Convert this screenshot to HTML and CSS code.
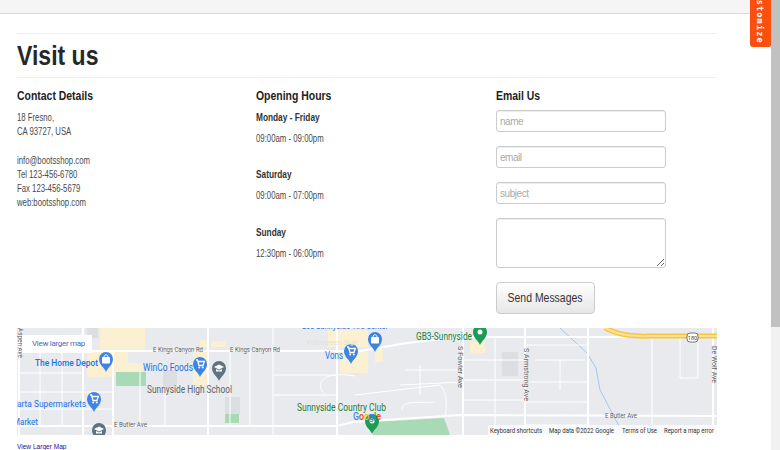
FILE: index.html
```html
<!DOCTYPE html>
<html lang="en">
<head>
<meta charset="utf-8">
<title>Visit us</title>
<link rel="stylesheet" href="styles.css">
</head>
<body>
<div class="topbar"></div>
<main class="container">
  <h1 class="title"><span class="title-text">Visit us</span></h1>
  <div class="columns">
    <section>
      <h2 class="col-head">Contact Details</h2>
      <p class="contact">18 Fresno,<br>CA 93727, USA</p>
      <p class="contact">info@bootsshop.com<br>Tel 123-456-6780<br>Fax 123-456-5679<br>web:bootsshop.com</p>
    </section>
    <section>
      <h2 class="col-head">Opening Hours</h2>
      <div class="hours"><h3 class="day">Monday - Friday</h3><p class="time">09:00am - 09:00pm</p></div>
      <div class="hours"><h3 class="day">Saturday</h3><p class="time">09:00am - 07:00pm</p></div>
      <div class="hours"><h3 class="day">Sunday</h3><p class="time">12:30pm - 06:00pm</p></div>
    </section>
    <section>
      <h2 class="col-head">Email Us</h2>
      <form class="form">
        <input class="field" type="text" placeholder="name">
        <input class="field" type="text" placeholder="email">
        <input class="field" type="text" placeholder="subject">
        <textarea class="field area"></textarea>
        <button class="send" type="button"><span class="send-text">Send Messages</span></button>
      </form>
    </section>
  </div>
  <div class="map">
    <svg class="map-svg" width="700" height="107" viewBox="17 328 700 107" xmlns="http://www.w3.org/2000/svg">
      <defs>
        <path id="pin" d="M0 0C-2-5-7-7-7-13A7 7 0 0 1 7-13C7-7 2-5 0 0Z"/>
        <g id="cart">
          <path d="M-4-17H-2.5L-1-11.5H3L4.3-15.5H-2" fill="none" stroke="#fff" stroke-width="1.3"/>
          <circle cx="-.8" cy="-9.6" r="1" fill="#fff"/><circle cx="2.8" cy="-9.6" r="1" fill="#fff"/>
        </g>
        <g id="bag">
          <rect x="-4" y="-15" width="8" height="6.5" rx="1" fill="#fff"/>
          <path d="M-2-15C-2-18 2-18 2-15" fill="none" stroke="#fff" stroke-width="1"/>
        </g>
        <g id="school">
          <path d="M-5-14 0-16.5 5-14 0-11.5Z" fill="#fff"/>
          <path d="M-3-12V-9.5H3V-12L0-10.5Z" fill="#fff"/>
        </g>
      </defs>
      <rect x="17" y="328" width="700" height="107" fill="#e8eaed"/>
      <g fill="#fbf0d2">
        <rect x="100" y="328" width="45" height="24"/>
        <rect x="87" y="352" width="28" height="25"/>
        <rect x="115" y="352" width="13" height="20"/>
        <rect x="128" y="363" width="15" height="9"/>
        <rect x="193" y="352" width="15" height="33"/>
        <rect x="200" y="340" width="8" height="7"/>
        <rect x="212" y="341" width="13" height="6"/>
        <rect x="328" y="330" width="40" height="17"/>
        <rect x="340" y="351" width="28" height="22"/>
        <rect x="375" y="349" width="8" height="13"/>
        <rect x="470" y="342" width="15" height="11"/>
      </g>
      <g fill="#dcdee1">
        <rect x="87" y="328" width="11" height="10"/>
        <rect x="163" y="370" width="14" height="17"/>
        <rect x="225" y="397" width="15" height="17"/>
        <rect x="502" y="352" width="16" height="24"/>
      </g>
      <g fill="#a8dab5">
        <rect x="116" y="372" width="30" height="14"/>
        <rect x="225" y="414" width="14" height="9"/>
        <path d="M373 435 373 422 444 418 450 435Z"/>
      </g>
      <path d="M560 328 587 353 596 368 600 390 620 428" fill="none" stroke="#a9c6ee" stroke-width="1"/>
      <g fill="none" stroke="#fff" stroke-width="2">
        <path d="M19 328V435M83 328V435M113 352V435M208 328V435M337 328V435M463 328V435M525 328V435M588 328V435M713 328V435"/>
        <path d="M17 351H360L407 343 460 337H717"/>
        <path d="M17 426H337L353 422 460 415 717 416"/>
      </g>
      <g fill="none" stroke="#fff" stroke-width="1">
        <path d="M273 328V435M495 337V435M652 337V435M19 373H83M19 392H113M19 409H113M40 351V426M62 351V426M140 372V426M165 387V426M230 351V426M250 351V426M273 375H337M273 395H337"/>
        <path d="M355 376C320 370 315 385 325 395M405 370H463M400 385 463 382M355 395 440 385C450 395 445 416 445 416M402 410C400 400 420 403 435 402M420 365V395"/>
        <path d="M463 360H525M463 380H525M463 400H525M525 345H588M535 360H585M525 382H588M525 402H588M525 425H588M560 360V390M680 337V378H698V337"/>
      </g>
      <path d="M605 328C625 338 640 336 655 336H717" fill="none" stroke="#f9c440" stroke-width="5"/>
      <path d="M605 328C625 338 640 336 655 336H717" fill="none" stroke="#fde293" stroke-width="2"/>
      <rect x="687" y="333" width="11" height="9" rx="3" fill="#fff" stroke="#555" stroke-width=".8"/>
      <text x="692.5" y="340" class="t shield">180</text>

      <g class="p-blue">
        <use href="#pin" x="106" y="372"/><use href="#pin" x="200" y="377"/>
        <use href="#pin" x="94" y="412"/><use href="#pin" x="351" y="364"/><use href="#pin" x="375" y="352"/>
      </g>
      <g class="p-grey"><use href="#pin" x="219" y="381"/><use href="#pin" x="99" y="443"/></g>
      <g class="p-green"><use href="#pin" x="480" y="345"/><use href="#pin" x="372" y="434"/></g>
      <use href="#bag" x="106" y="372"/><use href="#cart" x="200" y="377"/>
      <use href="#cart" x="94" y="412"/><use href="#cart" x="351" y="364"/><use href="#bag" x="375" y="352"/>
      <use href="#school" x="219" y="381"/><use href="#school" x="99" y="443"/>
      <circle cx="480" cy="332" r="2.5" fill="#fff"/><circle cx="372" cy="421" r="2.5" fill="#fff"/>

      <text x="302" y="329" class="t l-blue" textLength="86" lengthAdjust="spacingAndGlyphs">Los Sunnyside Tire Center</text>
      <text x="307" y="345" class="t ghost" textLength="51" lengthAdjust="spacingAndGlyphs">Fullscreen Sign</text>
      <text x="35" y="366" class="t l-blue bold" textLength="63" lengthAdjust="spacingAndGlyphs">The Home Depot</text>
      <text x="143" y="371" class="t l-blue big" textLength="50" lengthAdjust="spacingAndGlyphs">WinCo Foods</text>
      <text x="17" y="407" class="t l-blue" textLength="69" lengthAdjust="spacingAndGlyphs">arta Supermarkets</text>
      <text x="13" y="425" class="t l-blue" textLength="25" lengthAdjust="spacingAndGlyphs">Market</text>
      <text x="325" y="359" class="t l-blue big" textLength="18" lengthAdjust="spacingAndGlyphs">Vons</text>
      <text x="147" y="393" class="t l-grey big" textLength="85" lengthAdjust="spacingAndGlyphs">Sunnyside High School</text>
      <text x="416" y="340" class="t l-green big" textLength="56" lengthAdjust="spacingAndGlyphs">GB3-Sunnyside</text>
      <text x="297" y="411" class="t l-green big" textLength="89" lengthAdjust="spacingAndGlyphs">Sunnyside Country Club</text>

      <text x="353" y="420" class="t g-logo" textLength="28" lengthAdjust="spacingAndGlyphs"><tspan fill="#4285f4">G</tspan><tspan fill="#ea4335">o</tspan><tspan fill="#fbbc04">o</tspan><tspan fill="#4285f4">g</tspan><tspan fill="#34a853">l</tspan><tspan fill="#ea4335">e</tspan></text>

      <text x="153" y="352" class="t road" textLength="50" lengthAdjust="spacingAndGlyphs">E Kings Canyon Rd</text>
      <text x="230" y="352" class="t road" textLength="50" lengthAdjust="spacingAndGlyphs">E Kings Canyon Rd</text>
      <text x="114" y="427" class="t road" textLength="33" lengthAdjust="spacingAndGlyphs">E Butler Ave</text>
      <text x="605" y="418" class="t road" textLength="32" lengthAdjust="spacingAndGlyphs">E Butler Ave</text>
      <text transform="translate(18 328) rotate(90)" class="t road" textLength="30" lengthAdjust="spacingAndGlyphs">Aspen Ave</text>
      <text transform="translate(458 346) rotate(90)" class="t road" textLength="42" lengthAdjust="spacingAndGlyphs">S Fowler Ave</text>
      <text transform="translate(524 348) rotate(90)" class="t road" textLength="53" lengthAdjust="spacingAndGlyphs">S Armstrong Ave</text>
      <text transform="translate(712 346) rotate(90)" class="t road" textLength="37" lengthAdjust="spacingAndGlyphs">De Wolf Ave</text>

      <rect x="488" y="425" width="229" height="10" fill="#fff" fill-opacity=".75"/>
      <text x="490" y="433" class="t attr" textLength="52" lengthAdjust="spacingAndGlyphs">Keyboard shortcuts</text>
      <text x="549" y="433" class="t attr" textLength="65" lengthAdjust="spacingAndGlyphs">Map data ©2022 Google</text>
      <text x="622" y="433" class="t attr" textLength="35" lengthAdjust="spacingAndGlyphs">Terms of Use</text>
      <text x="664" y="433" class="t attr" textLength="50" lengthAdjust="spacingAndGlyphs">Report a map error</text>
    </svg>
    <a class="larger-box" href="#">View larger map</a>
  </div>
  <a class="larger-link" href="#">View Larger Map</a>
</main>
<div class="customize"><span class="customize-text">Customize</span></div>
<div class="scroll"><div class="scroll-thumb"></div></div>
</body>
</html>
```

FILE: styles.css
```css
* { box-sizing: border-box; }
html, body { height: 100%; }
body {
  margin: 0;
  height: 450px;
  overflow: hidden;
  background: #fff;
  font-family: "Liberation Sans", Arial, sans-serif;
  color: #4a4a4a;
  position: relative;
}
.topbar {
  height: 14px;
  width: 771px;
  background: #f5f5f5;
  border-bottom: 1px solid #d8d8d8;
}
.container {
  width: 700px;
  margin-left: 17px;
  padding-top: 19px;
}
.title {
  margin: 0;
  height: 45px;
  border-top: 1px solid #eee;
  border-bottom: 1px solid #eee;
  font-size: 27px;
  line-height: 44px;
  font-weight: bold;
  color: #272727;
}
.title-text {
  display: inline-block;
  transform: scaleX(.853);
  transform-origin: left;
}
.columns {
  display: grid;
  grid-template-columns: 239px 240px 221px;
  height: 250px;
}
.col-head {
  margin: 11px 0 0;
  font-size: 12px;
  line-height: 14px;
  font-weight: bold;
  color: #222;
  transform: scaleX(.87);
  transform-origin: left;
}
.contact {
  margin: 7.5px 0 14.5px;
  font-size: 10px;
  line-height: 14.3px;
  transform: scaleX(.775);
  transform-origin: left;
}
.hours { height: 57.5px; }
.col-head + .hours { margin-top: 7.5px; }
.day {
  margin: 0;
  font-size: 10px;
  line-height: 14px;
  font-weight: bold;
  color: #333;
  transform: scaleX(.83);
  transform-origin: left;
}
.time {
  margin: 7px 0 0;
  font-size: 10px;
  line-height: 14px;
  transform: scaleX(.78);
  transform-origin: left;
}
.form {
  display: flex;
  flex-direction: column;
  align-items: flex-start;
  margin-top: 7px;
}
.field {
  display: block;
  width: 170px;
  height: 22px;
  margin: 0 0 14px;
  padding: 0 3px;
  border: 1px solid #ccc;
  border-radius: 3px;
  box-shadow: inset 0 1px 1px rgba(0,0,0,.075);
  font-family: "Liberation Sans", Arial, sans-serif;
  font-size: 10px;
  letter-spacing: -.45px;
  background: #fff;
}
.field::placeholder { color: #aaa; }
.area { height: 50px; }
.send {
  width: 99px;
  height: 32px;
  padding: 0;
  border: 1px solid #ccc;
  border-radius: 4px;
  background: linear-gradient(#fff, #e6e6e6);
  font-family: "Liberation Sans", Arial, sans-serif;
  font-size: 12px;
  color: #333;
}
.send-text {
  display: inline-block;
  transform: scaleX(.87);
}
.map { position: relative; height: 107px; }
.map-svg { display: block; }
.t { font-family: Roboto, sans-serif; }
.l-blue { fill: #1a73e8; font-size: 9.5px; }
.big { font-size: 10px; }
.bold { font-weight: 500; }
.l-grey { fill: #5f6368; }
.l-green { fill: #188038; }
.ghost { fill: #e6e2d0; font-size: 8px; }
.road { fill: #5f6368; font-size: 6.5px; }
.attr { fill: #333; font-size: 6.4px; }
.shield { fill: #444; font-size: 5.5px; text-anchor: middle; }
.g-logo { font-size: 11px; font-weight: 500; }
.p-blue { fill: #3f84e5; }
.p-grey { fill: #5f7382; }
.p-green { fill: #1a9c52; }
.larger-box {
  position: absolute;
  left: 5px;
  top: 7px;
  width: 70px;
  height: 18px;
  padding-left: 10px;
  background: #fff;
  font-family: Roboto, sans-serif;
  font-size: 8px;
  letter-spacing: -.3px;
  line-height: 18px;
  color: #4a68c0;
  text-decoration: none;
}
.larger-link {
  display: block;
  margin-top: 7px;
  font-size: 7.5px;
  line-height: 10px;
  color: #1a0dab;
  text-decoration: none;
  transform: scaleX(.875);
  transform-origin: left;
}
.customize {
  position: absolute;
  left: 750px;
  top: 0;
  width: 21px;
  height: 47px;
  overflow: hidden;
  background: #f9500d;
  border-radius: 0 0 2px 3px;
}
.customize-text {
  position: absolute;
  left: 5px;
  bottom: 3px;
  writing-mode: vertical-rl;
  font-family: "DejaVu Sans Mono", monospace;
  font-weight: bold;
  font-size: 8.5px;
  letter-spacing: 1.2px;
  color: #fff;
  white-space: nowrap;
}
.scroll {
  position: absolute;
  left: 771px;
  top: 0;
  width: 9px;
  height: 450px;
  background: #f1f1f1;
}
.scroll-thumb {
  height: 327px;
  background: #c1c1c1;
}
```
